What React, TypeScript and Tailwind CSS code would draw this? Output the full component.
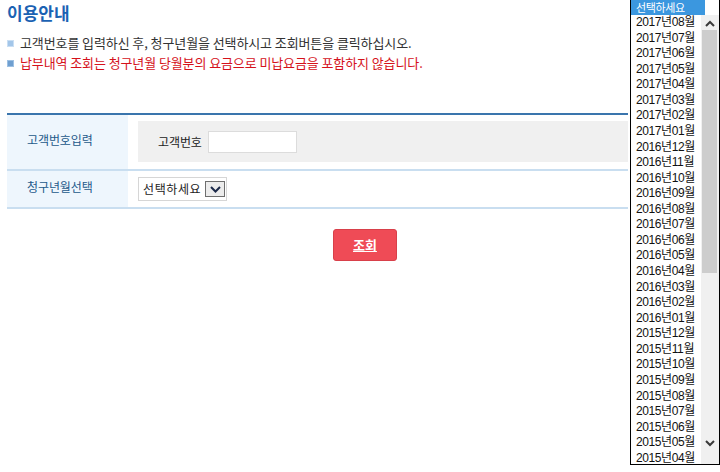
import React from "react";

const months: string[] = [];
for (let i = 0; i < 29; i++) {
  const total = 2017 * 12 + 7 - i;
  const y = Math.floor(total / 12);
  const m = (total % 12) + 1;
  months.push(`${y}년${String(m).padStart(2, "0")}월`);
}

function Chevron({ dir }: { dir: "up" | "down" }) {
  return (
    <svg width="10" height="7" viewBox="0 0 10 7">
      <path
        d={dir === "up" ? "M1 6 L5 2 L9 6" : "M1 1 L5 5 L9 1"}
        fill="none"
        stroke="#3a3a3a"
        strokeWidth="2"
      />
    </svg>
  );
}

export default function App() {
  return (
    <div className="relative w-[720px] h-[472px] overflow-hidden bg-white font-['Noto_Sans_CJK_KR',sans-serif]">
      <div className="w-[628px] pl-[7px]">
        <h1 className="pt-[1px] text-[17px] leading-[24px] font-bold text-[#1b62b3]">
          이용안내
        </h1>

        <ul className="mt-[8px] text-[13px] leading-[20px] tracking-[-0.1px]">
          <li className="flex items-center gap-[6px] text-[#333]">
            <span className="w-[7px] h-[7px] bg-[#a3c6e9] border border-[#c9def3]" />
            고객번호를 입력하신 후, 청구년월을 선택하시고 조회버튼을 클릭하십시오.
          </li>
          <li className="flex items-center gap-[6px] text-[#d5121b]">
            <span className="w-[7px] h-[7px] bg-[#6f9fd0] border border-[#9dc0e3]" />
            납부내역 조회는 청구년월 당월분의 요금으로 미납요금을 포함하지 않습니다.
          </li>
        </ul>

        <div className="mt-[40px] border-t-2 border-[#3a75ad] text-[12px] tracking-[-0.1px]">
          {/* 고객번호 */}
          <div className="flex h-[56px] border-b-2 border-[#c9def0]">
            <div className="w-[121px] bg-[#eef6fd] flex items-center pl-[20px] pb-[4px] text-[#24598a]">
              고객번호입력
            </div>
            <div className="flex-1 pl-[10px] pt-[6px] pb-[7px]">
              <div className="h-full bg-[#f0f0f0] flex items-center pl-[20px] gap-[6px] text-[#222]">
                <span>고객번호</span>
                <input className="w-[89px] h-[22px] border border-[#dcdcdc] bg-white outline-none" />
              </div>
            </div>
          </div>

          {/* 청구년월 */}
          <div className="flex h-[38px] border-b-2 border-[#c9def0]">
            <div className="w-[121px] bg-[#eef6fd] flex items-center pl-[20px] pb-[4px] text-[#24598a]">
              청구년월선택
            </div>
            <div className="flex-1 pl-[10px] pt-[6px]">
              <div className="w-[89px] h-[24px] border border-[#d6d6d6] flex items-center pl-[4px] text-[#222] tracking-[0.6px]">
                <span>선택하세요</span>
                <span className="ml-auto mr-[1px] w-[20px] h-[16px] border border-[#6e6e6e] bg-[#ececec] flex items-center justify-center">
                  <svg width="11" height="7" viewBox="0 0 11 7">
                    <path d="M1 1 L5.5 5.5 L10 1" fill="none" stroke="#1c2a4a" strokeWidth="2" />
                  </svg>
                </span>
              </div>
            </div>
          </div>
        </div>

        <button className="mt-[20px] ml-[326px] w-[64px] h-[32px] rounded-[3px] bg-[#ef4b56] border border-[#d8404a] text-white text-[13px] font-bold underline">
          조회
        </button>
      </div>

      {/* open select list */}
      <div className="absolute left-[630px] top-[-1px] w-[90px] h-[466px] border border-black bg-white overflow-hidden flex flex-col font-['Liberation_Sans','Noto_Sans_CJK_KR',sans-serif] text-[12px] tracking-[-0.4px] text-[#111]">
        <div className="flex h-[15px] shrink-0">
          <div className="w-[74px] bg-[#3b97df] text-white pl-[5px] leading-[14px] font-['Noto_Sans_CJK_KR',sans-serif] text-[11px]">
            선택하세요
          </div>
        </div>
        <div className="flex flex-1 min-h-0">
          <div className="w-[70px] overflow-hidden">
            {months.map((m) => (
              <div key={m} className="h-[15.57px] leading-[15.57px] pl-[5px] whitespace-nowrap">
                {m}
              </div>
            ))}
          </div>
          <div className="w-[18px] bg-[#f0f0f0] flex flex-col">
            <div className="h-[15px] flex items-center justify-center pt-[1px]">
              <Chevron dir="up" />
            </div>
            <div className="ml-[1px] w-[15px] h-[243px] bg-[#cdcdcd]" />
            <div className="flex-1" />
            <div className="h-[17px] mb-[12px] flex items-center justify-center">
              <Chevron dir="down" />
            </div>
          </div>
        </div>
      </div>
    </div>
  );
}
